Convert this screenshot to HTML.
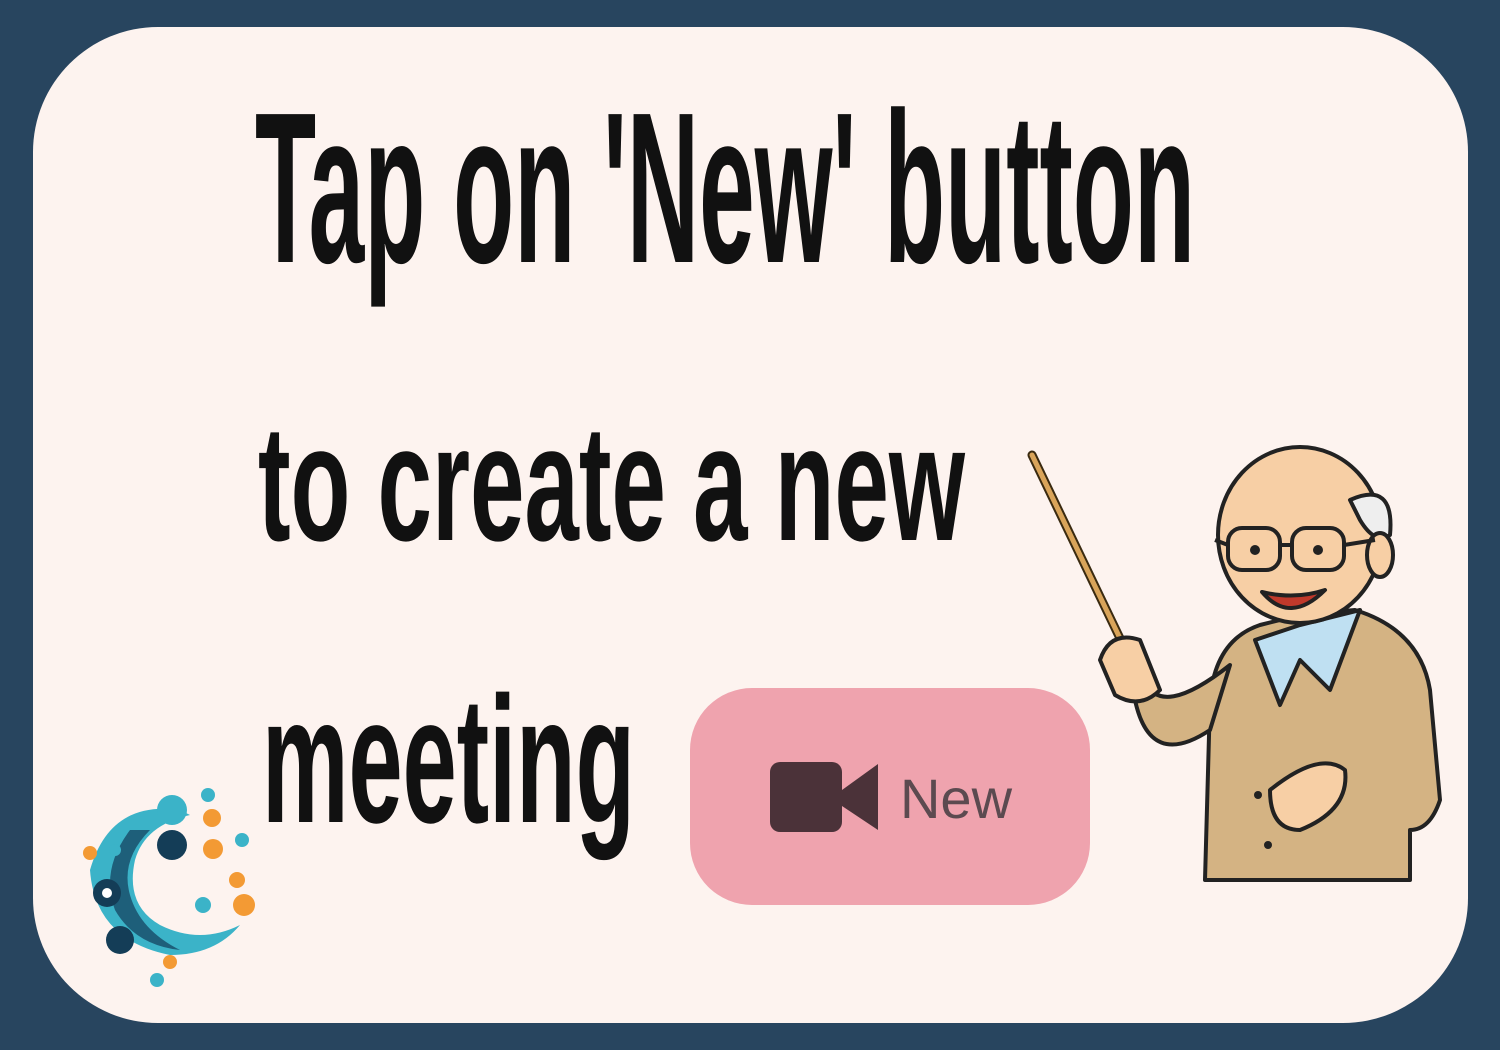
<!DOCTYPE html>
<html><head><meta charset="utf-8"><style>
html,body{margin:0;padding:0;width:1500px;height:1050px;background:#28455f;overflow:hidden}
</style></head><body>
<svg width="1500" height="1050" viewBox="0 0 1500 1050" xmlns="http://www.w3.org/2000/svg">
<rect x="0" y="0" width="1500" height="1050" fill="#28455f"/>
<rect x="33" y="27" width="1435" height="996" rx="125" fill="#fdf3ef"/>
<g font-family="'Liberation Sans Narrow','Liberation Sans',sans-serif" font-weight="bold" fill="#111">
<text x="255" y="262" font-size="215" textLength="940" lengthAdjust="spacingAndGlyphs">Tap on 'New' button</text>
<text x="258" y="540" font-size="165" textLength="707" lengthAdjust="spacingAndGlyphs">to create a new</text>
<text x="262" y="822" font-size="180" textLength="373" lengthAdjust="spacingAndGlyphs">meeting</text>
</g>
<!-- button -->
<rect x="690" y="688" width="400" height="217" rx="62" fill="#efa3ae"/>
<rect x="770" y="762" width="72" height="70" rx="10" fill="#4b3239"/>
<path d="M842 790 L878 764 L878 830 L842 806 Z" fill="#4b3239"/>
<text x="900" y="818" font-family="'Liberation Sans',sans-serif" font-size="56" fill="#5c4a50" textLength="112" lengthAdjust="spacingAndGlyphs">New</text>
<!-- pointer -->
<line x1="1032" y1="455" x2="1140" y2="680" stroke="#3a2a10" stroke-width="9" stroke-linecap="round"/>
<line x1="1032" y1="455" x2="1140" y2="680" stroke="#d9a45a" stroke-width="5" stroke-linecap="round"/>
<!-- old man -->
<g stroke="#222" stroke-width="4" stroke-linejoin="round">
<path d="M1205 880 L1210 700 Q1215 640 1260 625 L1300 615 L1355 610 Q1420 630 1430 690 L1440 800 Q1430 830 1410 830 L1410 880 Z" fill="#d4b383"/>
<path d="M1255 640 L1280 705 L1300 660 L1330 690 L1360 610 L1300 625 Z" fill="#bfe0f2"/>
<path d="M1230 665 Q1160 720 1145 680 L1135 700 Q1150 770 1210 730 Z" fill="#d4b383"/>
<path d="M1100 660 Q1110 630 1140 640 L1160 690 Q1140 710 1115 695 Z" fill="#f7cfa5"/>
<path d="M1270 790 Q1320 750 1345 770 Q1350 810 1300 830 Q1270 830 1270 790 Z" fill="#f7cfa5"/>
<ellipse cx="1300" cy="535" rx="82" ry="88" fill="#f7cfa5"/>
<path d="M1350 500 Q1395 480 1390 535 Q1375 545 1360 520 Z" fill="#eee"/>
<ellipse cx="1380" cy="555" rx="13" ry="22" fill="#f7cfa5"/>
<path d="M1262 592 Q1290 625 1325 590 Q1295 600 1262 592 Z" fill="#c0392b"/>
</g>
<g fill="none" stroke="#222" stroke-width="4">
<rect x="1228" y="528" width="52" height="42" rx="14"/>
<rect x="1292" y="528" width="52" height="42" rx="14"/>
<path d="M1280 545 L1292 545 M1344 545 L1375 540 M1228 545 L1215 540"/>
</g>
<circle cx="1255" cy="550" r="5" fill="#222"/><circle cx="1318" cy="550" r="5" fill="#222"/>
<circle cx="1258" cy="795" r="4" fill="#222"/><circle cx="1268" cy="845" r="4" fill="#222"/>
<!-- logo -->
<path d="M180 810 Q110 800 90 870 Q95 940 170 955 Q215 955 240 925 Q200 945 160 925 Q125 905 135 860 Q145 825 190 815 Z" fill="#3bb3c8"/>
<path d="M130 830 Q100 870 115 910 Q135 945 180 950 Q140 930 130 895 Q120 860 150 830 Z" fill="#1e5f7a"/>
<g fill="#143d57"><circle cx="172" cy="845" r="15"/><circle cx="120" cy="940" r="14"/><circle cx="107" cy="893" r="14"/></g>
<circle cx="107" cy="893" r="5" fill="#fff"/>
<g fill="#f39a34"><circle cx="212" cy="818" r="9"/><circle cx="213" cy="849" r="10"/><circle cx="237" cy="880" r="8"/><circle cx="244" cy="905" r="11"/><circle cx="90" cy="853" r="7"/><circle cx="170" cy="962" r="7"/></g>
<g fill="#3bb3c8"><circle cx="172" cy="810" r="15"/><circle cx="208" cy="795" r="7"/><circle cx="242" cy="840" r="7"/><circle cx="203" cy="905" r="8"/><circle cx="157" cy="980" r="7"/><circle cx="115" cy="850" r="6"/></g>
</svg>
</body></html>
